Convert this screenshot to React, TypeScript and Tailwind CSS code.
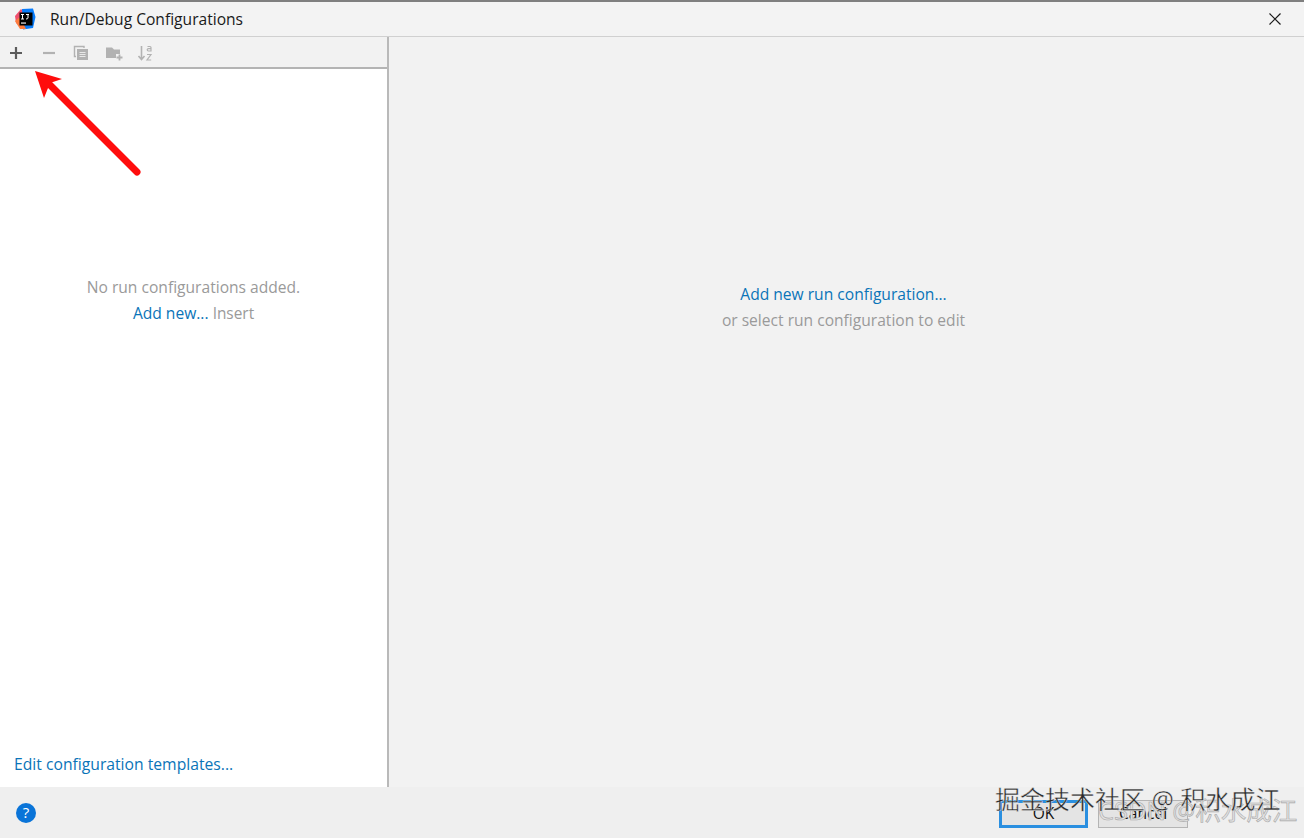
import React from 'react';

const font = { fontFamily: '"Open Sans", "Noto Sans CJK SC", sans-serif' };

const AppLogo = () => (
  <svg width="22" height="22" viewBox="0 0 22 22">
    <path d="M1 8 L7 1 L12 6 L8 20 L2 15 Z" fill="#f0506e" />
    <path d="M8 1 L19 0.5 L21.5 9 L19 20 L9 21.5 Z" fill="#087cfa" />
    <path d="M1 13 L6 21 L12 21 L6 9 Z" fill="#fe7c3c" />
    <rect x="5.5" y="4.5" width="13" height="13" fill="#000" />
    <rect x="7" y="14.5" width="5" height="1.1" fill="#fff" />
    <path d="M7 6.5 H10 M8.5 6.5 V11 M7 11 H10 M12 6.5 H15 M14 6.5 V10 Q14 11 12 11" stroke="#fff" strokeWidth="1" fill="none" />
  </svg>
);

const Toolbar = () => (
  <div className="flex h-[32px] items-center border-b-2 border-[#b4b4b4] bg-[#f2f2f2] pt-[2px]">
    <div className="flex items-center gap-[16px] pl-[8px]">
      <svg width="16" height="16" viewBox="0 0 16 16"><path d="M8 2 V14 M2 8 H14" stroke="#5c5c5c" strokeWidth="2.2" /></svg>
      <svg width="16" height="16" viewBox="0 0 16 16" className="translate-x-[1px]"><path d="M2 8 H14" stroke="#b2b2b2" strokeWidth="2.2" /></svg>
      <svg width="16" height="16" viewBox="0 0 16 16" className="translate-x-[1px]">
        <path d="M3 11.5 H1.5 V1.5 H11 V3" fill="none" stroke="#b2b2b2" strokeWidth="1.4" />
        <rect x="4" y="4" width="11" height="11" fill="#b2b2b2" />
        <path d="M6.5 7.5 H12.5 M6.5 9.5 H12.5 M6.5 11.5 H12.5" stroke="#e8e8e8" strokeWidth="1" />
      </svg>
      <svg width="18" height="16" viewBox="0 0 18 16" className="translate-x-[1px]">
        <path d="M1 2.5 H7 L9 4.5 H15 V9 H11 V13 H1 Z" fill="#b2b2b2" />
        <path d="M14.5 9.5 V15.5 M11.5 12.5 H17.5" stroke="#b2b2b2" strokeWidth="1.8" />
      </svg>
      <svg width="16" height="18" viewBox="0 0 16 18" className="-ml-[1px]">
        <path d="M4.5 2 V15 M1.5 12 L4.5 15.5 L7.5 12" fill="none" stroke="#b2b2b2" strokeWidth="1.6" />
        <path d="M10.5 2.5 H13 Q14 2.5 14 3.5 V7 H11.5 Q10.2 7 10.2 5.8 Q10.2 4.7 11.5 4.7 H14 M10 10.5 H14 L10 16 H14.2" fill="none" stroke="#b2b2b2" strokeWidth="1.2" />
      </svg>
    </div>
  </div>
);

export default function App() {
  return (
    <div style={font} className="relative flex h-[838px] w-[1304px] flex-col overflow-hidden border-t-2 border-[#7f7f7f] bg-[#f2f2f2]">
      {/* title bar */}
      <div className="flex h-[35px] shrink-0 items-center justify-between border-b border-[#d0d0d0] bg-[#f3f3f3] pl-[14px] pr-[21px]">
        <div className="flex items-center gap-[14px]">
          <AppLogo />
          <span className="pt-[2px] text-[15.6px] leading-none text-[#1a1a1a]">Run/Debug Configurations</span>
        </div>
        <svg width="16" height="16" viewBox="0 0 16 16"><path d="M2.5 2.5 L13.5 13.5 M13.5 2.5 L2.5 13.5" stroke="#1a1a1a" strokeWidth="1.2" /></svg>
      </div>

      <div className="flex min-h-0 flex-1">
        {/* left pane */}
        <div className="flex w-[389px] shrink-0 flex-col border-r-2 border-[#b9b9b9]">
          <Toolbar />
          <div className="flex flex-1 flex-col bg-white">
            <div className="flex flex-col items-center pt-[205px] text-[15.6px] leading-[26px]">
              <span className="text-[#9a9a9a]">No run configurations added.</span>
              <span className="text-[#0a74b8]">Add new... <span className="text-[15.4px] text-[#9a9a9a]">Insert</span></span>
            </div>
            <div className="mt-auto pb-[10px] pl-[14px] text-[15.7px] leading-[26px] text-[#0a74b8]">Edit configuration templates...</div>
          </div>
        </div>

        {/* right pane */}
        <div className="flex flex-1 flex-col items-center bg-[#f2f2f2] pr-[6px] pt-[244px] text-[15.6px] leading-[26px]">
          <span className="text-[#0a74b8]">Add new run configuration...</span>
          <span className="text-[#9a9a9a]">or select run configuration to edit</span>
        </div>
      </div>

      {/* footer */}
      <div className="flex h-[51px] shrink-0 items-center justify-between bg-[#efefef] pl-[16px]">
        <div className="flex h-[20px] w-[20px] items-center justify-center rounded-full bg-[#0a74d8] text-[15px] leading-none text-white">?</div>
        <div className="flex items-center gap-[10px] pr-[116px] pt-[2px]">
          <div className="flex h-[28px] w-[89px] items-center justify-center border-[3px] border-[#2a8fe0] bg-[#e4e4e4] text-[15.6px] leading-none text-[#111]">OK</div>
          <div className="flex h-[28px] w-[90px] items-center justify-center border border-[#b4b4b4] bg-[#e4e4e4] text-[15.6px] leading-none text-[#111]">Cancel</div>
        </div>
      </div>

      {/* annotation arrow */}
      <svg className="absolute left-0 -top-[2px]" width="160" height="190" viewBox="0 0 160 190">
        <path d="M137 172 L47 82" stroke="#ff0d0d" strokeWidth="7" strokeLinecap="round" />
        <path d="M35 71 L62 79 L50 83 L44 98 Z" fill="#ff0d0d" />
      </svg>

      {/* image watermarks */}
      <div className="absolute left-[1098px] top-[796px] whitespace-nowrap text-[25.5px] leading-none text-[#e2e2e2]" style={{ ...font, WebkitTextStroke: '0.6px #a8a8a8' }}>CSDN @积水成江</div>
      <div className="absolute left-[995px] top-[785px] whitespace-nowrap text-[25px] leading-none text-[#2a2a2a]" style={{ ...font, WebkitTextStroke: '0.4px #f2f2f2' }}>掘金技术社区 @ 积水成江</div>
    </div>
  );
}
